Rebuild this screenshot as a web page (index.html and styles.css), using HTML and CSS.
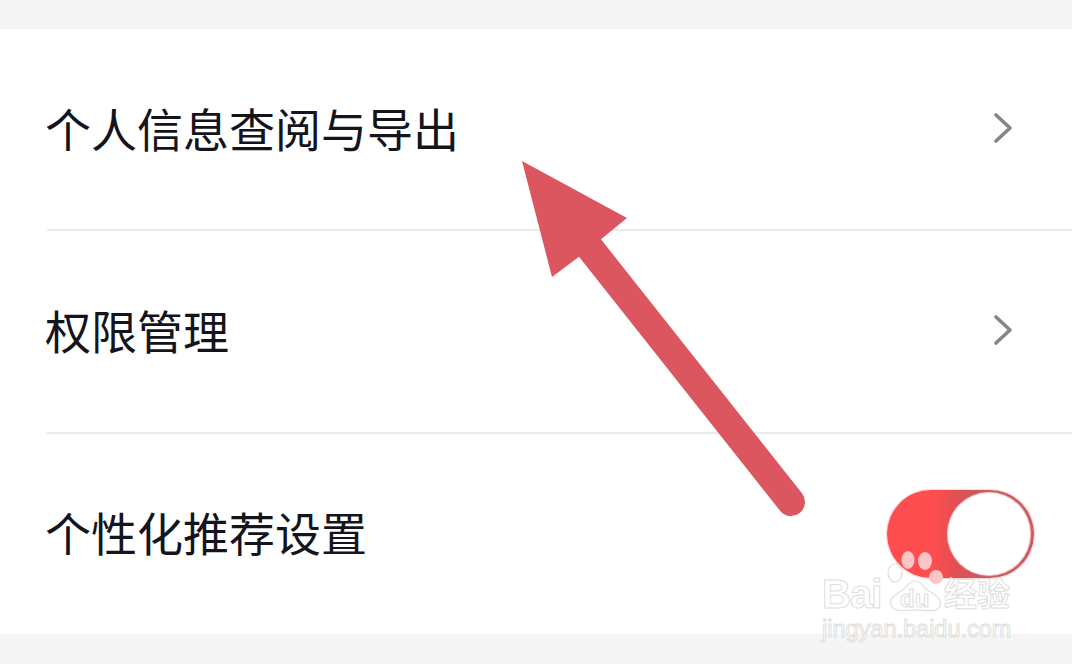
FILE: index.html
```html
<!DOCTYPE html>
<html lang="zh-CN">
<head>
<meta charset="utf-8">
<title>个人信息设置</title>
<link rel="stylesheet" href="styles.css">
</head>
<body>
<main class="screen">
  <div class="strip-top"></div>
  <section class="list">
    <div class="row">
      <span class="label">个人信息查阅与导出</span>
      <svg class="chevron" viewBox="0 0 20 32"><path d="M3 3 L17 16 L3 29"/></svg>
    </div>
    <div class="row">
      <span class="label">权限管理</span>
      <svg class="chevron" viewBox="0 0 20 32"><path d="M3 3 L17 16 L3 29"/></svg>
    </div>
    <div class="row row-last">
      <span class="label">个性化推荐设置</span>
      <div class="toggle"><div class="knob"></div></div>
    </div>
  </section>
  <div class="strip-bottom"></div>

  <svg class="arrow" viewBox="0 0 1072 664">
    <path class="arrow-head" d="M522 161 L627 218 L601 239.3 L579 256.7 L552 277 Z"/>
    <line class="arrow-shaft" x1="590" y1="248" x2="791" y2="502"/>
  </svg>

  <div class="watermark">
    <svg class="wm-paw" viewBox="0 0 130 100">
      <ellipse class="toe-white" cx="11" cy="23" rx="7" ry="9"/>
      <path class="paw-body" d="M31 31 C38 31 39 38 45 41 C53 45 58 50 56 56 C53 63 43 60 32 60 C20 60 10 63 7 55 C5 49 11 45 17 41 C23 38 24 31 31 31 Z"/>
      <ellipse class="toe-pink" cx="24" cy="10" rx="6.5" ry="9"/>
      <ellipse class="toe-pink" cx="41" cy="11" rx="7" ry="9"/>
      <ellipse class="toe-pink" cx="52" cy="27" rx="7" ry="7"/>
    </svg>
    <div class="wm-line">
      <span class="wm-bai">Bai</span>
      <span class="wm-du">du</span>
      <span class="wm-jy">经验</span>
    </div>
    <div class="wm-url">jingyan.baidu.com</div>
  </div>
</main>
</body>
</html>
```
FILE: styles.css
```css
* { box-sizing: border-box; }
html, body { margin: 0; padding: 0; }
body { background: #f5f5f5; font-family: "Noto Sans CJK SC", "Noto Sans", sans-serif; }

.screen {
  position: relative;
  width: 1072px;
  height: 664px;
  display: flex;
  flex-direction: column;
  overflow: hidden;
}
.strip-top { height: 29px; background: #f5f5f5; }
.strip-bottom { height: 30px; background: #f5f5f5; }

.list {
  flex: 1;
  display: flex;
  flex-direction: column;
  background: #fff;
  padding-left: 47px;
}
.row {
  flex: 1;
  display: flex;
  align-items: center;
  justify-content: space-between;
  padding-right: 59px;
  border-bottom: 2px solid #ebebeb;
}
.row-last { border-bottom: 0; padding-right: 38px; }

.label {
  font-size: 46px;
  line-height: 1;
  color: #14151c;
  margin-left: -2px;
  margin-bottom: 5px;
}

.chevron { width: 20px; height: 32px; margin-bottom: 3px; }
.chevron path {
  fill: none;
  stroke: #85858a;
  stroke-width: 3.6;
  stroke-linecap: round;
  stroke-linejoin: round;
}

.toggle {
  width: 147px;
  height: 88px;
  border-radius: 44px;
  display: flex;
  justify-content: flex-end;
  align-items: center;
  padding-right: 4px;
  background: linear-gradient(90deg, #fd4d4f 0%, #fd4d4f 33%, #e14f53 46%, #c95a5f 62%, #c95a5f 100%);
  box-shadow: 0 0 1px 1px rgba(255, 170, 170, .5);
}
.knob {
  width: 82px;
  height: 82px;
  border-radius: 50%;
  background: #fff;
  box-shadow: 0 0 1px 1px #ffd6d6;
}

.arrow {
  position: absolute;
  inset: 0;
  width: 1072px;
  height: 664px;
  pointer-events: none;
}
.arrow-head { fill: #dc5660; }
.arrow-shaft { stroke: #dc5660; stroke-width: 28; stroke-linecap: round; }

.watermark {
  position: absolute;
  left: 822px;
  top: 575px;
  width: 195px;
  height: 66px;
  font-family: "Liberation Sans", "Noto Sans CJK SC", sans-serif;
  color: rgba(255, 255, 255, .8);
  -webkit-text-stroke: 1px #dedede;
}
.wm-line {
  position: relative;
  height: 40px;
}
.wm-bai {
  position: absolute;
  left: 0;
  top: -3px;
  font-size: 40px;
  line-height: 44px;
  font-weight: 700;
  letter-spacing: -1px;
}
.wm-du {
  position: absolute;
  left: 78px;
  top: 11px;
  font-size: 24px;
  line-height: 26px;
  font-weight: 700;
}
.wm-jy {
  position: absolute;
  left: 122px;
  top: 0;
  font-family: "Noto Sans CJK SC", sans-serif;
  font-size: 33px;
  line-height: 34px;
  font-weight: 700;
}
.wm-url {
  position: absolute;
  left: 0;
  top: 41px;
  width: 195px;
  font-size: 23.5px;
  line-height: 26px;
  white-space: nowrap;
}
.wm-paw {
  position: absolute;
  left: 62px;
  top: -25px;
  width: 130px;
  height: 100px;
}
.toe-pink { fill: #ffc4c6; }
.toe-white { fill: #fff; stroke: #dedede; stroke-width: 1.2; }
.paw-body { fill: #fff; stroke: #dedede; stroke-width: 1.2; }
```
